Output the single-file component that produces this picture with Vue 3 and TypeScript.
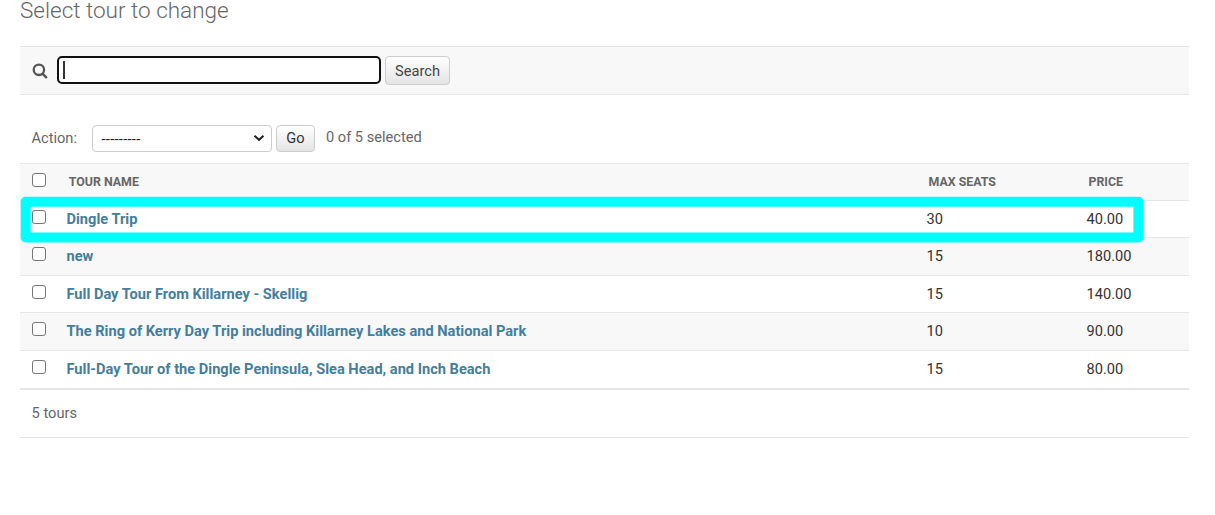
<script setup lang="ts">
interface Tour {
  name: string
  seats: number
  price: string
  height: number
}

const tours: Tour[] = [
  { name: 'Dingle Trip', seats: 30, price: '40.00', height: 37 },
  { name: 'new', seats: 15, price: '180.00', height: 38 },
  { name: 'Full Day Tour From Killarney - Skellig', seats: 15, price: '140.00', height: 37 },
  { name: 'The Ring of Kerry Day Trip including Killarney Lakes and National Park', seats: 10, price: '90.00', height: 38 },
  { name: 'Full-Day Tour of the Dingle Peninsula, Slea Head, and Inch Beach', seats: 15, price: '80.00', height: 39 },
]
</script>

<template>
  <main class="page">
    <h1 class="title">Select tour to change</h1>
    <form class="toolbar" @submit.prevent>
      <svg class="glass" viewBox="0 0 16 16" width="16" height="16" aria-hidden="true">
        <circle cx="6.9" cy="6.8" r="5.2" fill="none" stroke="#555" stroke-width="2.3" />
        <path d="M10.8 10.8 L14.2 14.3" stroke="#555" stroke-width="2.4" stroke-linecap="round" />
      </svg>
      <div class="field">
        <input type="text" class="query" aria-label="Search tours" />
        <span class="caret"></span>
      </div>
      <button type="submit" class="btn search">Search</button>
    </form>
    <div class="actions">
      <span class="label">Action:</span>
      <div class="select">
        <span class="dashes">---------</span>
        <svg class="chevron" viewBox="0 0 12 8" width="12" height="8" aria-hidden="true">
          <path d="M1.5 1.7 L6 5.8 L10.5 1.7" fill="none" stroke="#222" stroke-width="2" />
        </svg>
      </div>
      <button type="button" class="btn go">Go</button>
      <span class="counter">0 of 5 selected</span>
    </div>
    <section class="table">
      <div class="row head">
        <input type="checkbox" class="check" aria-label="Select all" />
        <span class="cell">Tour name</span>
        <span class="cell">Max seats</span>
        <span class="cell">Price</span>
      </div>
      <div v-for="tour in tours" :key="tour.name" class="row" :style="{ height: tour.height + 'px' }">
        <input type="checkbox" class="check" :aria-label="tour.name" />
        <a class="cell name">{{ tour.name }}</a>
        <span class="cell">{{ tour.seats }}</span>
        <span class="cell">{{ tour.price }}</span>
      </div>
      <svg class="highlight" viewBox="0 0 1125 48" width="1125" height="48" aria-hidden="true">
        <rect x="5.6" y="5.7" width="1112.8" height="35.8" fill="none" stroke="#0ff" stroke-width="10" stroke-linejoin="round" />
      </svg>
    </section>
    <p class="total">5 tours</p>
  </main>
</template>

<style>
body {
  margin: 0;
  background: #fff;
}
</style>

<style scoped>
.page {
  box-sizing: border-box;
  width: 1215px;
  height: 515px;
  padding: 0 26px 0 20px;
  font-family: Roboto, "Liberation Sans", sans-serif;
  font-size: 14.625px;
  color: #333;
}
.title {
  margin: 0;
  height: 46px;
  line-height: 21px;
  font-size: 22.5px;
  font-weight: 300;
  color: #666;
}
.toolbar {
  box-sizing: border-box;
  height: 49px;
  display: flex;
  align-items: flex-start;
  padding: 9px 12px;
  background: #f8f8f8;
  border-top: 1px solid #e6e6e6;
  border-bottom: 1px solid #e6e6e6;
}
.glass {
  margin: 7px 9px 0 0;
}
.field {
  position: relative;
  width: 324px;
  height: 28px;
  margin-right: 4px;
}
.query {
  box-sizing: border-box;
  display: block;
  width: 324px;
  height: 28px;
  padding: 2px 5px;
  border: 2px solid #101010;
  border-radius: 5px;
  background: #fff;
  outline: none;
  font: inherit;
}
.caret {
  position: absolute;
  left: 6px;
  top: 5px;
  width: 2px;
  height: 18px;
  background: #333;
}
.btn {
  box-sizing: border-box;
  padding: 0;
  border: 1px solid #ccc;
  border-radius: 4px;
  background: linear-gradient(#fff, #e4e4e4);
  color: #333;
  font: inherit;
  text-align: center;
}
.search {
  width: 65px;
  height: 29px;
  color: #444;
}
.actions {
  box-sizing: border-box;
  height: 68px;
  display: flex;
  align-items: flex-start;
  padding: 30px 0 0 11.5px;
  color: #666;
}
.label {
  width: 60.5px;
  line-height: 27px;
}
.select {
  box-sizing: border-box;
  width: 180px;
  height: 27px;
  margin-right: 4px;
  padding: 0 6px 0 8.5px;
  display: flex;
  align-items: center;
  justify-content: space-between;
  border: 1px solid #ccc;
  border-radius: 4px;
  background: #fff;
  color: #222;
}
.dashes {
  letter-spacing: 0.3px;
}
.chevron {
  margin-top: -1px;
}
.go {
  width: 39px;
  height: 27px;
  margin-right: 11px;
  padding-bottom: 2px;
}
.counter {
  line-height: 25px;
}
.table {
  position: relative;
}
.row {
  box-sizing: border-box;
  display: grid;
  grid-template-columns: 46.5px 860px 160px 1fr;
  height: 37px;
  align-items: start;
  border-bottom: 1px solid #e6e6e6;
}
.row:nth-child(odd) {
  background: #f8f8f8;
}
.row:nth-child(even) {
  background: #fff;
}
.row:nth-child(6) {
  border-bottom-width: 2px;
}
.cell {
  line-height: 36px;
  white-space: nowrap;
}
.name {
  font-weight: 700;
  color: #447e9b;
}
.head {
  grid-template-columns: 48.8px 859.7px 160px 1fr;
  height: 38px;
  border-top: 1px solid #e6e6e6;
  font-size: 12.375px;
  font-weight: 700;
  text-transform: uppercase;
  color: #666;
}
.check {
  appearance: none;
  box-sizing: border-box;
  width: 14px;
  height: 14px;
  margin: 9px 0 0 11.7px;
  border: 1px solid #767676;
  border-radius: 3px;
  background: #fff;
}
.highlight {
  position: absolute;
  left: 0;
  top: 33px;
  pointer-events: none;
}
.total {
  box-sizing: border-box;
  height: 48px;
  margin: 0;
  padding-left: 11.6px;
  line-height: 46px;
  border-bottom: 1px solid #e6e6e6;
  color: #666;
}
</style>
